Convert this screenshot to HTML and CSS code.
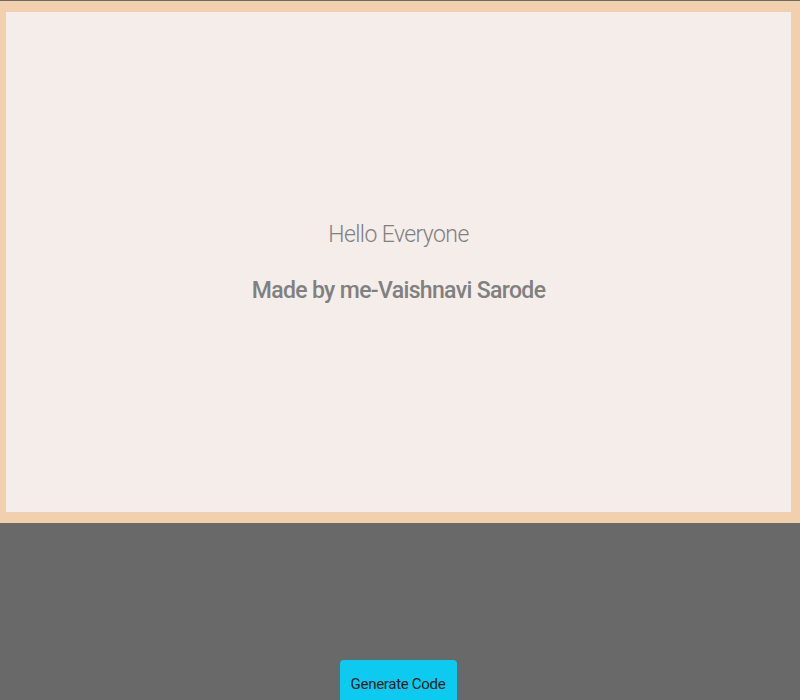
FILE: index.html
```html
<!DOCTYPE html>
<html>
<head>
<meta charset="utf-8">
<link rel="stylesheet" href="styles.css">
</head>
<body>
<div class="frame">
  <div class="panel">
    <p class="hello">Hello Everyone</p>
    <p class="made">Made by me-Vaishnavi Sarode</p>
  </div>
</div>
<div class="bottom">
  <button class="btn">Generate Code</button>
</div>
</body>
</html>
```
FILE: styles.css
```css
html, body {
  margin: 0;
  padding: 0;
  background: #686968;
  font-family: Roboto, "Noto Sans", sans-serif;
}
body {
  padding-top: 1px;
}
.frame {
  background: #f3d0ad;
  padding: 11px 9px 11px 6px;
}
.panel {
  background: #f5edea;
  height: 500px;
  display: flex;
  flex-direction: column;
  align-items: center;
  justify-content: center;
  color: #808080;
}
.hello {
  margin: 0;
  font-size: 23px;
  font-weight: 300;
  letter-spacing: -0.6px;
}
.made {
  margin: 29px 0 0;
  font-size: 23px;
  font-weight: 500;
  letter-spacing: -0.65px;
}
.bottom {
  display: flex;
  justify-content: center;
  padding-top: 137px;
}
.btn {
  background: #0dcaf0;
  border: none;
  border-radius: 4px;
  width: 117px;
  height: 48px;
  font-family: Roboto, "Noto Sans", sans-serif;
  font-size: 15px;
  letter-spacing: -0.3px;
  color: #1a1a1a;
  padding: 0;
  margin-left: -4px;
}
```
